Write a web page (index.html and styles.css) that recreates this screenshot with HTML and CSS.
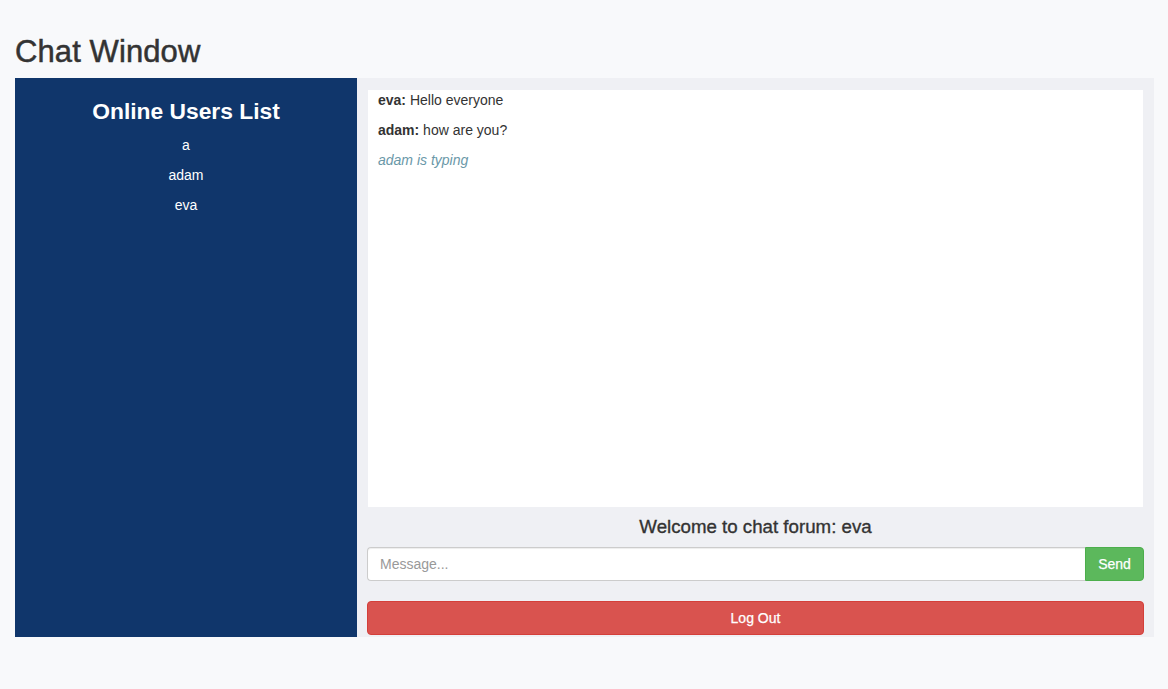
FILE: index.html
```html
<!DOCTYPE html>
<html lang="en">
<head>
<meta charset="utf-8">
<title>Chat Window</title>
<link rel="stylesheet" href="styles.css">
</head>
<body>
<div class="container">
  <h2 class="page-title">Chat Window</h2>
  <div class="chat">
    <aside class="sidebar">
      <h3 class="sidebar-title">Online Users List</h3>
      <ul class="users">
        <li>a</li>
        <li>adam</li>
        <li>eva</li>
      </ul>
    </aside>
    <section class="main">
      <ul class="messages">
        <li><strong>eva:</strong> Hello everyone</li>
        <li><strong>adam:</strong> how are you?</li>
        <li class="typing">adam is typing</li>
      </ul>
      <h4 class="welcome">Welcome to chat forum: eva</h4>
      <div class="input-group">
        <input class="message-input" type="text" placeholder="Message...">
        <button class="btn btn-send" type="button">Send</button>
      </div>
      <button class="btn btn-logout" type="button">Log Out</button>
    </section>
  </div>
</div>
</body>
</html>
```

FILE: styles.css
```css
* {
  box-sizing: border-box;
}

html, body {
  margin: 0;
  padding: 0;
}

body {
  background: #f8f9fb;
  font-family: "Liberation Sans", Arial, Helvetica, sans-serif;
  font-size: 14px;
  line-height: 20px;
  color: #333333;
}

.container {
  padding: 35px 14px 0 15px;
}

.page-title {
  margin: 0 0 10px 0;
  font-size: 31px;
  line-height: 33px;
  font-weight: 500;
  color: #333333;
  -webkit-text-stroke: 0.5px #333333;
  letter-spacing: 0.1px;
}

.chat {
  display: flex;
  height: 559px;
}

.sidebar {
  width: 342px;
  flex: none;
  background: #10366b;
  color: #ffffff;
  text-align: center;
  padding-top: 21px;
}

.sidebar-title {
  margin: 0 0 11px 0;
  font-size: 22.8px;
  line-height: 25px;
  font-weight: bold;
}

.users {
  list-style: none;
  margin: 0;
  padding: 0;
  display: flex;
  flex-direction: column;
  gap: 10px;
}

.users li {
  line-height: 20px;
}

.main {
  flex: 1;
  background: #eff0f4;
  padding: 12px 10px 2px 10px;
  display: flex;
  flex-direction: column;
}

.messages {
  list-style: none;
  margin: 0 1px;
  padding: 0 10px;
  height: 417px;
  background: #ffffff;
  display: flex;
  flex-direction: column;
  gap: 10px;
}

.messages li {
  line-height: 20px;
}

.messages .typing {
  font-style: italic;
  color: #6a98a8;
}

.welcome {
  margin: 10px 0;
  font-size: 18.7px;
  line-height: 20px;
  font-weight: 500;
  text-align: center;
  color: #333333;
  -webkit-text-stroke: 0.35px #333333;
}

.input-group {
  display: flex;
  height: 34px;
}

.message-input {
  flex: 1;
  height: 34px;
  border: 1px solid #cccccc;
  border-right: none;
  border-radius: 4px 0 0 4px;
  padding: 6px 12px;
  font-family: inherit;
  font-size: 14px;
  color: #555555;
  background: #ffffff;
  box-shadow: inset 0 1px 1px rgba(0, 0, 0, 0.075);
  outline: none;
}

.message-input::placeholder {
  color: #999999;
}

.btn {
  font-family: inherit;
  font-size: 14px;
  line-height: 20px;
  color: #ffffff;
  border: 1px solid transparent;
  cursor: pointer;
  -webkit-text-stroke: 0.25px #ffffff;
}

.btn-send {
  width: 59px;
  height: 34px;
  padding: 6px 12px;
  background: #5cb85c;
  border-color: #4cae4c;
  border-radius: 0 4px 4px 0;
}

.btn-logout {
  margin-top: 20px;
  height: 34px;
  width: 100%;
  background: #d9534f;
  border-color: #d43f3a;
  border-radius: 4px;
}
```
